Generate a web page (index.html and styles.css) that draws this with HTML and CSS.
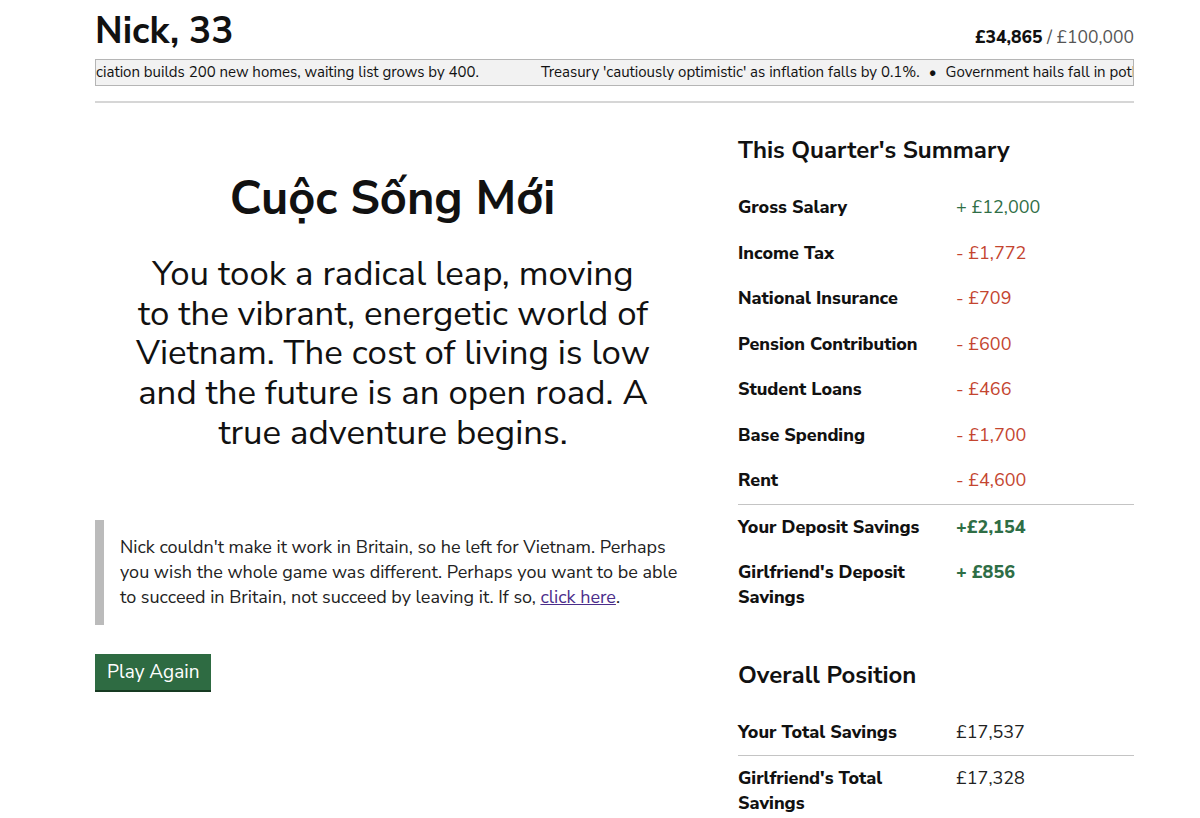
FILE: index.html
```html
<!DOCTYPE html>
<html lang="en">
<head>
<meta charset="utf-8">
<title>Nick, 33</title>
<link rel="stylesheet" href="styles.css">
</head>
<body>
<div class="page">
  <header class="top">
    <h1 class="name">Nick, 33</h1>
    <div class="goal"><strong>£34,865</strong> / £100,000</div>
  </header>
  <div class="ticker">
    <div class="track">
      <span class="item">ciation builds 200 new homes, waiting list grows by 400.</span>
      <span class="spacer"></span>
      <span class="item">Treasury 'cautiously optimistic' as inflation falls by 0.1%.</span>
      <span class="dot">•</span>
      <span class="item">Government hails fall in potholes as councils resurface roads.</span>
    </div>
  </div>
  <hr class="rule">
  <main class="content">
    <section class="story">
      <h2 class="title">Cuộc Sống Mới</h2>
      <p class="lead">You took a radical leap, moving to the vibrant, energetic world of Vietnam. The cost of living is low and the future is an open road. A true adventure begins.</p>
      <blockquote class="note">Nick couldn't make it work in Britain, so he left for Vietnam. Perhaps you wish the whole game was different. Perhaps you want to be able to succeed in Britain, not succeed by leaving it. If so, <a href="#">click here</a>.</blockquote>
      <button class="again">Play Again</button>
    </section>
    <aside class="summary">
      <h3 class="sum-title">This Quarter's Summary</h3>
      <table class="sum">
        <tr><th>Gross Salary</th><td class="pos">+ £12,000</td></tr>
        <tr><th>Income Tax</th><td class="neg">- £1,772</td></tr>
        <tr><th>National Insurance</th><td class="neg">- £709</td></tr>
        <tr><th>Pension Contribution</th><td class="neg">- £600</td></tr>
        <tr><th>Student Loans</th><td class="neg">- £466</td></tr>
        <tr><th>Base Spending</th><td class="neg">- £1,700</td></tr>
        <tr class="sep"><th>Rent</th><td class="neg">- £4,600</td></tr>
        <tr><th>Your Deposit Savings</th><td class="pos bold">+£2,154</td></tr>
        <tr><th>Girlfriend's Deposit Savings</th><td class="pos bold">+ £856</td></tr>
      </table>
      <h3 class="sum-title overall">Overall Position</h3>
      <table class="sum">
        <tr class="sep"><th>Your Total Savings</th><td>£17,537</td></tr>
        <tr><th>Girlfriend's Total Savings</th><td>£17,328</td></tr>
      </table>
    </aside>
  </main>
</div>
</body>
</html>
```
FILE: styles.css
```css
html, body {
  margin: 0;
  padding: 0;
  background: #ffffff;
}
body {
  font-family: "Nunito Sans", "Nunito", "Lato", "Noto Sans", sans-serif;
  color: #111;
}
.page {
  width: 1039px;
  margin-left: 95px;
}
.top {
  display: flex;
  justify-content: space-between;
  align-items: baseline;
  padding-top: 8px;
}
.name {
  margin: 0;
  font-size: 37px;
  font-weight: 700;
  line-height: 46px;
  color: #111;
}
.goal {
  font-size: 17.5px;
  color: #555;
}
.goal strong {
  color: #111;
  font-weight: 800;
}
.ticker {
  margin-top: 5px;
  height: 25px;
  border: 1px solid #b5b5b5;
  background: #f2f2f2;
  overflow: hidden;
}
.track {
  display: flex;
  white-space: nowrap;
  font-size: 15px;
  line-height: 25px;
  color: #111;
}
.spacer {
  flex: 0 0 62px;
}
.dot {
  padding: 0 9px;
}
.rule {
  margin: 15px 0 0;
  border: 0;
  border-top: 2px solid #d6d6d6;
}
.content {
  display: flex;
  gap: 48px;
}
.story {
  width: 595px;
  flex: 0 0 595px;
}
.title {
  margin: 67px 0 0;
  text-align: center;
  font-size: 47px;
  font-weight: 700;
  line-height: 58px;
}
.lead {
  margin: 26px 0 0;
  padding: 0 39px 0 40px;
  text-align: center;
  font-size: 34.8px;
  line-height: 39.7px;
  color: #111;
}
.note {
  margin: 67px 0 0;
  padding: 15px 0 15px 16px;
  border-left: 9px solid #bbbbbb;
  font-size: 18px;
  line-height: 25px;
  color: #222;
}
.note a {
  color: #4b2d8a;
}
.again {
  margin-top: 29px;
  display: block;
  font-family: inherit;
  font-size: 19px;
  line-height: 24px;
  padding: 6px 12px 6px;
  background: #2e6b42;
  color: #fff;
  border: 0;
  border-bottom: 2px solid #173a22;
  border-radius: 0;
}
.summary {
  flex: 1;
  padding-top: 32px;
}
.sum-title {
  margin: 0 0 20px;
  font-size: 24px;
  font-weight: 700;
  line-height: 30px;
}
.overall {
  margin-top: 39px;
}
.sum {
  width: 100%;
  border-collapse: collapse;
  font-size: 18px;
  line-height: 25px;
}
.sum th {
  width: 208px;
  padding: 10px 10px 10.5px 0;
  text-align: left;
  vertical-align: top;
  font-weight: 800;
}
.sum td {
  vertical-align: top;
  padding: 10px 0 10.5px;
  color: #222;
}
.sum tr.sep th, .sum tr.sep td {
  border-bottom: 1px solid #c4c4c4;
}
.pos {
  color: #2f6e46 !important;
}
.neg {
  color: #c4452f !important;
}
.bold {
  font-weight: 800;
}
```
